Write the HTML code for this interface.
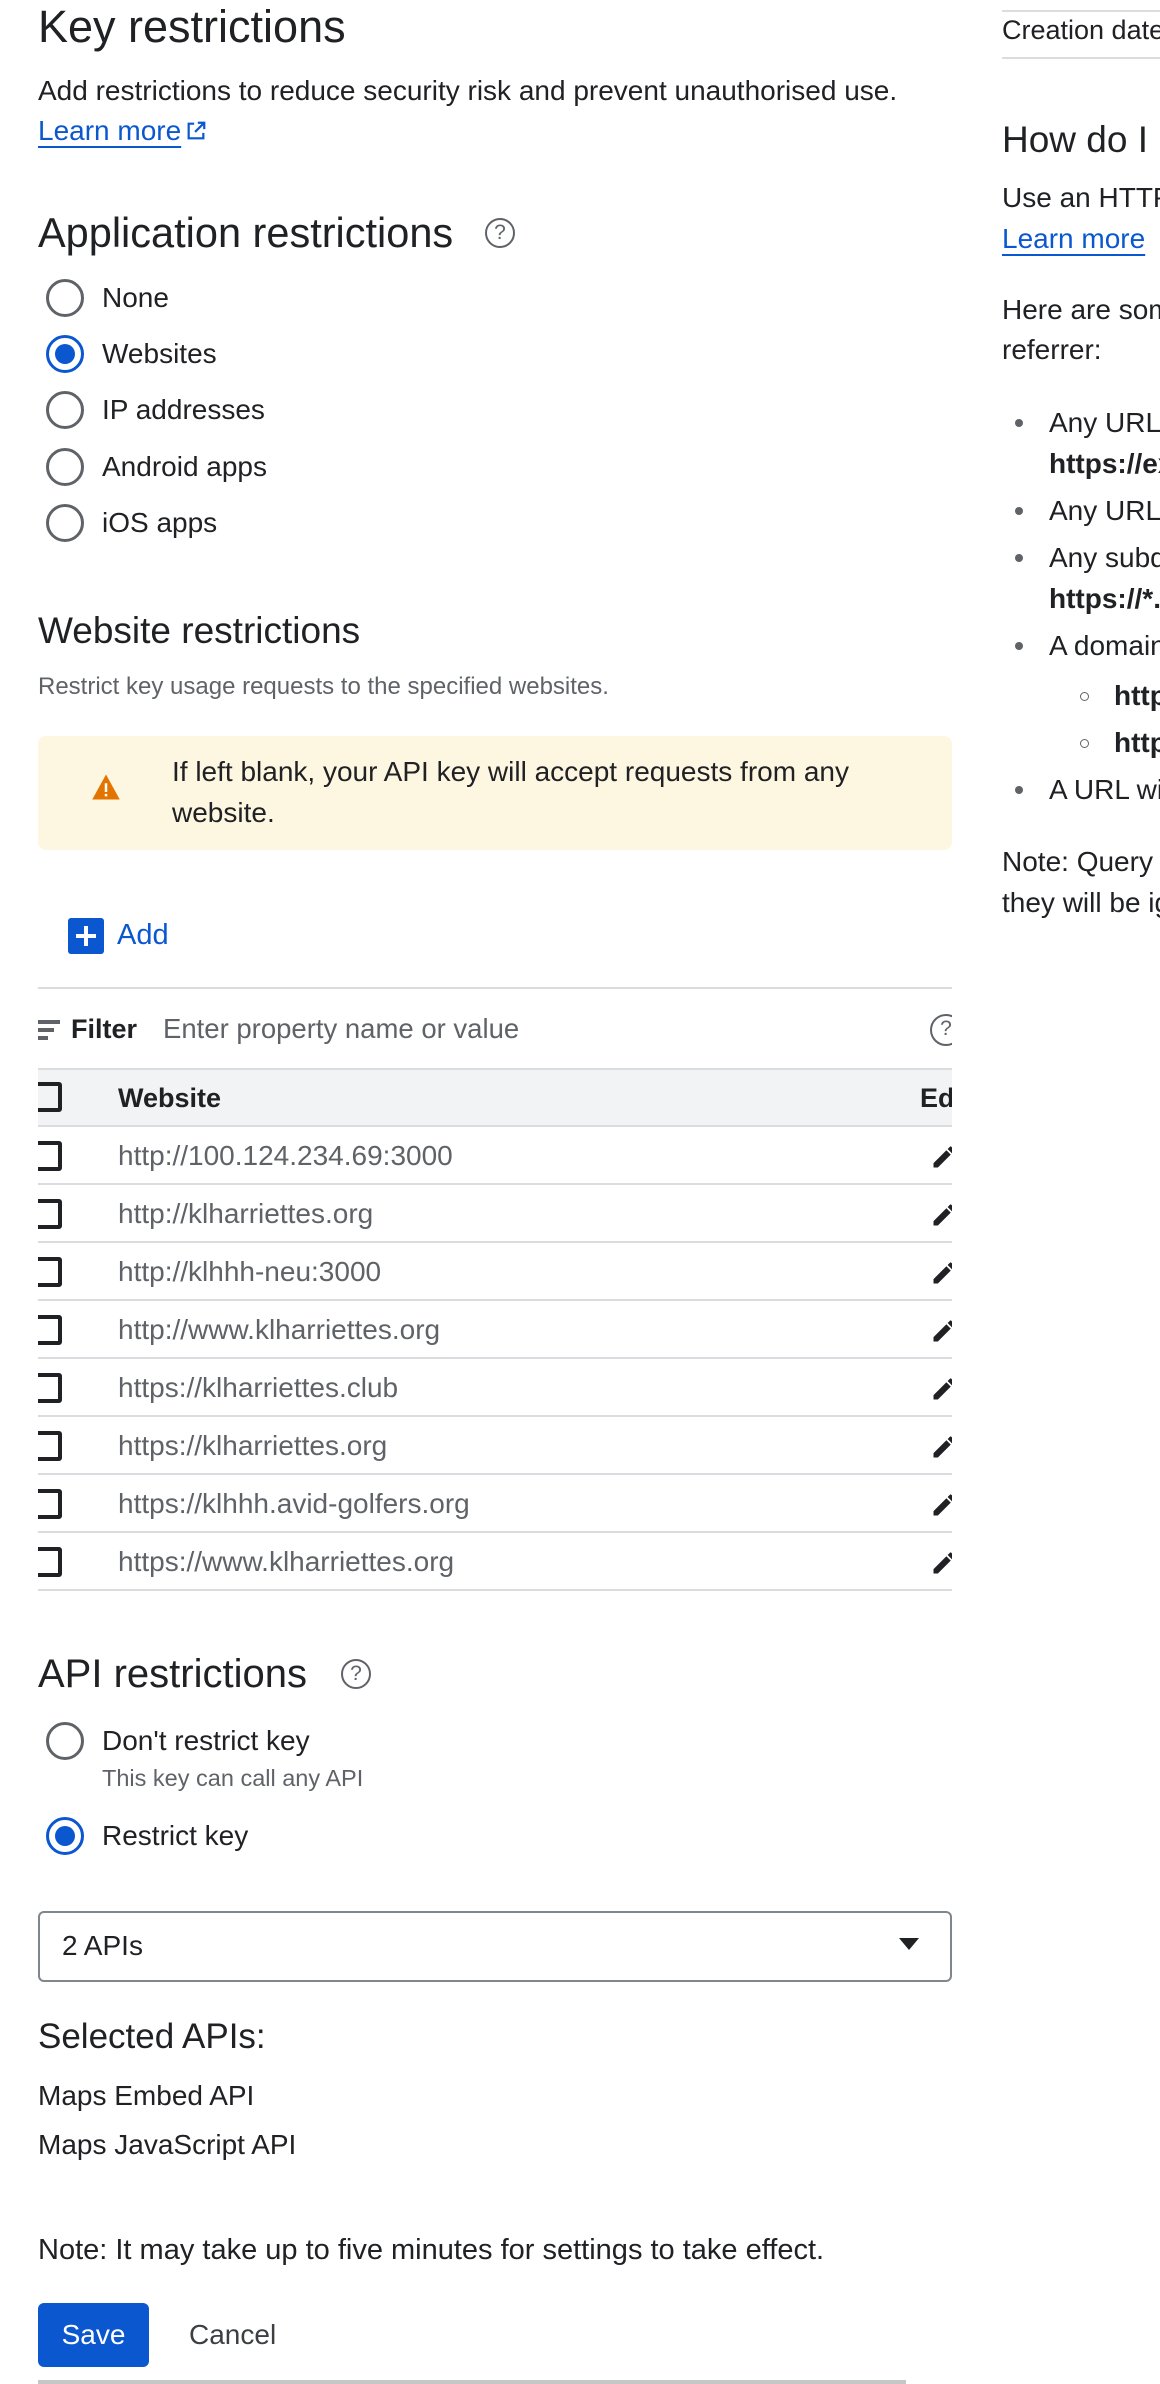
<!DOCTYPE html>
<html><head><meta charset="utf-8">
<style>
*{margin:0;padding:0;box-sizing:border-box}
html,body{width:1160px;height:2384px;overflow:hidden;background:#fff}
body{position:relative;font-family:"Liberation Sans",Arial,sans-serif;color:#202124;font-size:28px}
.t{position:absolute;white-space:nowrap;line-height:40px}
.g{color:#5f6368}
.lnk{color:#0b57d0;text-decoration:underline;text-underline-offset:6px;text-decoration-thickness:2px}
.radio{position:absolute;width:38px;height:38px;border-radius:50%;border:3px solid #5f6368}
.radio.on{border-color:#0b57d0}
.radio.on::after{content:"";position:absolute;left:6px;top:6px;width:20px;height:20px;border-radius:50%;background:#0b57d0}
.help{position:absolute;width:30px;height:30px;border-radius:50%;border:2.5px solid #5f6368;color:#5f6368;font-size:21px;line-height:25px;text-align:center}
.clip{position:absolute;left:38px;width:914px;overflow:hidden}
.row{position:absolute;left:0;width:914px;height:58px;border-bottom:2px solid #dadce0}
.cb{position:absolute;left:-10px;top:14px;width:34px;height:30px;border:4px solid #202124;border-radius:3px}
.row .t{left:80px;top:9px;color:#5f6368}
.pen{position:absolute;left:892px;top:16px}
.bul{position:absolute;width:8px;height:8px;border-radius:50%;background:#5f6368}
.sbul{position:absolute;width:9px;height:9px;border-radius:50%;border:1.5px solid #5f6368}
.rc{position:absolute;left:1002px;top:0;width:158px;height:960px;overflow:hidden}
.rc .t{left:0}
</style></head><body>

<div class="t" style="left:38px;top:5px;font-size:45px;line-height:44px">Key restrictions</div>
<div class="t" style="left:38px;top:71px">Add restrictions to reduce security risk and prevent unauthorised use.</div>
<div class="t lnk" style="left:38px;top:111px">Learn more</div>
<svg style="position:absolute;left:185px;top:120px" width="22" height="22" viewBox="0 0 24 24"><path d="M10 4H4v16h16v-6M14 3h7v7M21 3L11 13" fill="none" stroke="#0b57d0" stroke-width="2.4"/></svg>

<div class="t" style="left:38px;top:211px;font-size:41.5px;line-height:44px">Application restrictions</div>
<div class="help" style="left:485px;top:218px">?</div>

<div class="radio" style="left:46px;top:279px"></div><div class="t" style="left:102px;top:278px">None</div>
<div class="radio on" style="left:46px;top:335px"></div><div class="t" style="left:102px;top:334px">Websites</div>
<div class="radio" style="left:46px;top:391px"></div><div class="t" style="left:102px;top:390px">IP addresses</div>
<div class="radio" style="left:46px;top:448px"></div><div class="t" style="left:102px;top:447px">Android apps</div>
<div class="radio" style="left:46px;top:504px"></div><div class="t" style="left:102px;top:503px">iOS apps</div>

<div class="t" style="left:38px;top:611px;font-size:37px">Website restrictions</div>
<div class="t g" style="left:38px;top:667px;font-size:24px">Restrict key usage requests to the specified websites.</div>

<div style="position:absolute;left:38px;top:736px;width:914px;height:114px;background:#fdf6e0;border-radius:8px"></div>
<svg style="position:absolute;left:91px;top:773px" width="30" height="28" viewBox="0 0 24 22"><path d="M12 1L23 21H1z" fill="#e37400"/><rect x="11" y="8" width="2" height="7" fill="#fff"/><rect x="11" y="16.5" width="2" height="2" fill="#fff"/></svg>
<div class="t" style="left:172px;top:752px">If left blank, your API key will accept requests from any</div>
<div class="t" style="left:172px;top:793px">website.</div>

<div style="position:absolute;left:68px;top:918px;width:36px;height:36px;background:#0b57d0;border-radius:3px"></div>
<div style="position:absolute;left:76px;top:934px;width:20px;height:4px;background:#fff"></div>
<div style="position:absolute;left:84px;top:926px;width:4px;height:20px;background:#fff"></div>
<div class="t" style="left:117px;top:915px;color:#0b57d0;font-size:29px">Add</div>

<div style="position:absolute;left:38px;top:987px;width:914px;height:2px;background:#dadce0"></div>

<div class="clip" style="top:989px;height:606px">
  <div style="position:absolute;left:0;top:31px;width:22px;height:4px;background:#5f6368"></div>
  <div style="position:absolute;left:0;top:39px;width:16px;height:4px;background:#5f6368"></div>
  <div style="position:absolute;left:0;top:47px;width:10px;height:4px;background:#5f6368"></div>
  <div class="t" style="left:33px;top:20px;font-weight:bold;font-size:27px">Filter</div>
  <div class="t g" style="left:125px;top:20px;font-size:27.5px">Enter property name or value</div>
  <div class="help" style="left:892px;top:25px;width:32px;height:32px">?</div>
  <div style="position:absolute;left:0;top:79px;width:914px;height:2px;background:#dadce0"></div>
  <div style="position:absolute;left:0;top:81px;width:914px;height:57px;background:#f1f3f4;border-bottom:2px solid #dadce0">
    <div class="cb" style="top:12px"></div>
    <div class="t" style="left:80px;top:8px;font-weight:bold;font-size:27px">Website</div>
    <div class="t" style="left:882px;top:8px;font-weight:bold;font-size:27px">Ed</div>
  </div>
  <div class="row" style="top:138px"><div class="cb"></div><div class="t">http://100.124.234.69:3000</div><svg class="pen" width="28" height="28" viewBox="0 0 24 24"><path d="M3 17.25V21h3.75L17.8 9.94l-3.75-3.75zM20.7 7.04a1 1 0 000-1.41l-2.34-2.34a1 1 0 00-1.41 0l-1.83 1.83 3.75 3.75z" fill="#202124"/></svg></div>
  <div class="row" style="top:196px"><div class="cb"></div><div class="t">http://klharriettes.org</div><svg class="pen" width="28" height="28" viewBox="0 0 24 24"><path d="M3 17.25V21h3.75L17.8 9.94l-3.75-3.75zM20.7 7.04a1 1 0 000-1.41l-2.34-2.34a1 1 0 00-1.41 0l-1.83 1.83 3.75 3.75z" fill="#202124"/></svg></div>
  <div class="row" style="top:254px"><div class="cb"></div><div class="t">http://klhhh-neu:3000</div><svg class="pen" width="28" height="28" viewBox="0 0 24 24"><path d="M3 17.25V21h3.75L17.8 9.94l-3.75-3.75zM20.7 7.04a1 1 0 000-1.41l-2.34-2.34a1 1 0 00-1.41 0l-1.83 1.83 3.75 3.75z" fill="#202124"/></svg></div>
  <div class="row" style="top:312px"><div class="cb"></div><div class="t">http://www.klharriettes.org</div><svg class="pen" width="28" height="28" viewBox="0 0 24 24"><path d="M3 17.25V21h3.75L17.8 9.94l-3.75-3.75zM20.7 7.04a1 1 0 000-1.41l-2.34-2.34a1 1 0 00-1.41 0l-1.83 1.83 3.75 3.75z" fill="#202124"/></svg></div>
  <div class="row" style="top:370px"><div class="cb"></div><div class="t">https://klharriettes.club</div><svg class="pen" width="28" height="28" viewBox="0 0 24 24"><path d="M3 17.25V21h3.75L17.8 9.94l-3.75-3.75zM20.7 7.04a1 1 0 000-1.41l-2.34-2.34a1 1 0 00-1.41 0l-1.83 1.83 3.75 3.75z" fill="#202124"/></svg></div>
  <div class="row" style="top:428px"><div class="cb"></div><div class="t">https://klharriettes.org</div><svg class="pen" width="28" height="28" viewBox="0 0 24 24"><path d="M3 17.25V21h3.75L17.8 9.94l-3.75-3.75zM20.7 7.04a1 1 0 000-1.41l-2.34-2.34a1 1 0 00-1.41 0l-1.83 1.83 3.75 3.75z" fill="#202124"/></svg></div>
  <div class="row" style="top:486px"><div class="cb"></div><div class="t">https://klhhh.avid-golfers.org</div><svg class="pen" width="28" height="28" viewBox="0 0 24 24"><path d="M3 17.25V21h3.75L17.8 9.94l-3.75-3.75zM20.7 7.04a1 1 0 000-1.41l-2.34-2.34a1 1 0 00-1.41 0l-1.83 1.83 3.75 3.75z" fill="#202124"/></svg></div>
  <div class="row" style="top:544px"><div class="cb"></div><div class="t">https://www.klharriettes.org</div><svg class="pen" width="28" height="28" viewBox="0 0 24 24"><path d="M3 17.25V21h3.75L17.8 9.94l-3.75-3.75zM20.7 7.04a1 1 0 000-1.41l-2.34-2.34a1 1 0 00-1.41 0l-1.83 1.83 3.75 3.75z" fill="#202124"/></svg></div>
</div>

<div class="t" style="left:38px;top:1652px;font-size:40px;line-height:44px">API restrictions</div>
<div class="help" style="left:341px;top:1659px">?</div>

<div class="radio" style="left:46px;top:1722px"></div><div class="t" style="left:102px;top:1721px">Don't restrict key</div>
<div class="t g" style="left:102px;top:1758px;font-size:23.5px">This key can call any API</div>
<div class="radio on" style="left:46px;top:1817px"></div><div class="t" style="left:102px;top:1816px">Restrict key</div>

<div style="position:absolute;left:38px;top:1911px;width:914px;height:71px;border:2px solid #80868b;border-radius:6px"></div>
<div class="t" style="left:62px;top:1926px">2 APIs</div>
<svg style="position:absolute;left:899px;top:1938px" width="20" height="12" viewBox="0 0 20 12"><path d="M0 0h20L10 12z" fill="#202124"/></svg>

<div class="t" style="left:38px;top:2017px;font-size:35px">Selected APIs:</div>
<div class="t" style="left:38px;top:2076px">Maps Embed API</div>
<div class="t" style="left:38px;top:2125px">Maps JavaScript API</div>
<div class="t" style="left:38px;top:2230px;font-size:29px">Note: It may take up to five minutes for settings to take effect.</div>

<div style="position:absolute;left:38px;top:2303px;width:111px;height:64px;background:#0b57d0;border-radius:6px;color:#fff;text-align:center;line-height:64px;font-size:28px">Save</div>
<div class="t" style="left:189px;top:2315px;color:#3c4043">Cancel</div>
<div style="position:absolute;left:38px;top:2380px;width:868px;height:4px;background:#c4c7c5"></div>

<div class="rc">
<div style="position:absolute;left:0;top:10px;width:160px;height:2px;background:#dadce0"></div>
<div class="t" style="top:10px;font-size:27px">Creation date</div>
<div style="position:absolute;left:0;top:57px;width:160px;height:2px;background:#dadce0"></div>
<div class="t" style="top:118px;font-size:37px;line-height:44px">How do I restrict</div>
<div class="t" style="top:178px">Use an HTTP referrer</div>
<div class="t lnk" style="top:219px">Learn more</div>
<div class="t" style="top:290px">Here are some</div>
<div class="t" style="top:330px">referrer:</div>
<div class="bul" style="left:13px;top:419px"></div><div class="t" style="left:47px !important;top:403px">Any URL in</div>
<div class="t" style="left:47px !important;top:444px;font-weight:bold">https://example</div>
<div class="bul" style="left:13px;top:507px"></div><div class="t" style="left:47px !important;top:491px">Any URL in</div>
<div class="bul" style="left:13px;top:554px"></div><div class="t" style="left:47px !important;top:538px">Any subdomain</div>
<div class="t" style="left:47px !important;top:579px;font-weight:bold">https://*.example</div>
<div class="bul" style="left:13px;top:642px"></div><div class="t" style="left:47px !important;top:626px">A domain</div>
<div class="sbul" style="left:78px;top:692px"></div><div class="t" style="left:112px !important;top:676px;font-weight:bold">https</div>
<div class="sbul" style="left:78px;top:739px"></div><div class="t" style="left:112px !important;top:723px;font-weight:bold">https</div>
<div class="bul" style="left:13px;top:786px"></div><div class="t" style="left:47px !important;top:770px">A URL with</div>
<div class="t" style="top:842px">Note: Query parameters</div>
<div class="t" style="top:883px">they will be ignored</div>
</div>
</body></html>
